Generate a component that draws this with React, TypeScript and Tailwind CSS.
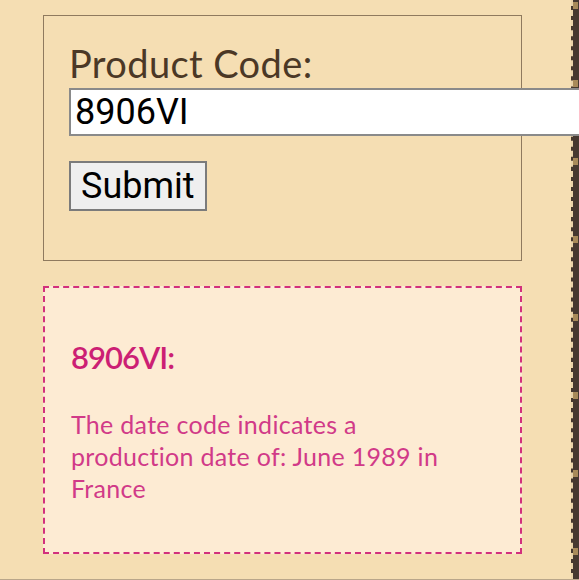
import React from 'react';

const stitches = [0, 1, 2, 3, 4, 5, 6, 7];

const App: React.FC = () => {
  return (
    <div className="flex h-[580px] w-full overflow-hidden bg-[#f5deb3] border-b border-[#b9a68a]">
      <div className="flex-1 min-w-0 pl-[43px] pt-[15px]">
        <form
          onSubmit={(e) => e.preventDefault()}
          className="w-[479px] h-[246px] border border-[#8f7a5e] pl-[25px] pt-[22px]"
        >
          <label className="block text-[38px] leading-[50px] tracking-[0.4px] text-[#4b3826] font-['Lato',sans-serif]">
            Product Code:
          </label>
          <input
            defaultValue="8906VI"
            className="relative z-10 block w-[520px] h-[48px] bg-white border-2 border-[#8a8a8a] px-[4px] text-[36px] text-black font-['Roboto',sans-serif] outline-none"
          />
          <button
            type="submit"
            className="mt-[25px] h-[50px] px-[10px] bg-[#efefef] border-2 border-[#7b7b7b] text-[36px] leading-none text-black font-['Roboto',sans-serif]"
          >
            Submit
          </button>
        </form>

        <div className="mt-[25px] w-[479px] h-[268px] bg-[#fdebd3] border-2 border-dashed border-[#d2307d] pl-[26px] pt-[51px]">
          <h2 className="text-[31px] leading-[36px] font-semibold tracking-[-1px] text-[#cc1f74] font-['Lato',sans-serif]">
            8906VI:
          </h2>
          <p className="w-[400px] mt-[33px] text-[25px] leading-[32px] tracking-[0.3px] text-[#d13a88] font-['Lato',sans-serif]">
            The date code indicates a production date of: June 1989 in France
          </p>
        </div>
      </div>

      <div className="w-[8px] shrink-0 bg-[#463830] border-l-2 border-dashed border-[#ead3a9] flex flex-col gap-[71px] pt-[2px]">
        {stitches.map((i) => (
          <div key={i} className="h-[7px] w-[5px] bg-[#a88a5a]" />
        ))}
      </div>
    </div>
  );
};

export default App;
